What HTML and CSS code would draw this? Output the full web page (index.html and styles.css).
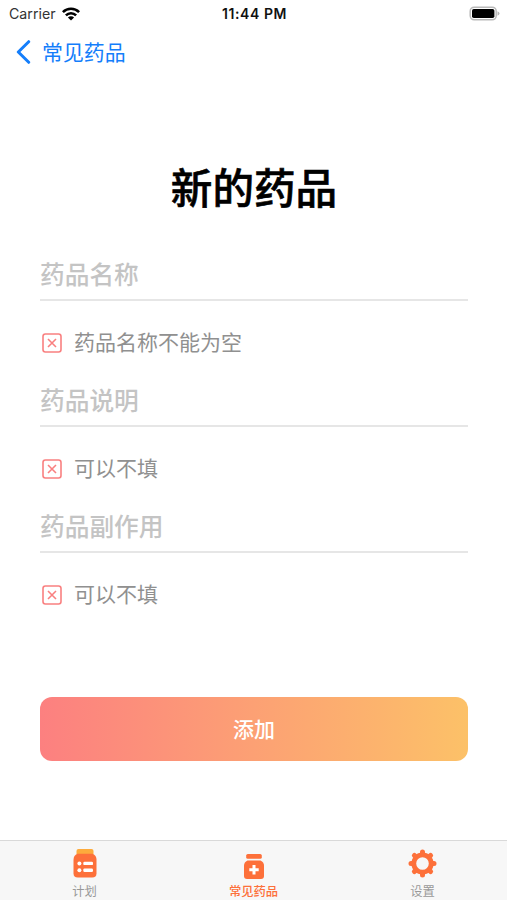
FILE: index.html
```html
<!DOCTYPE html>
<html lang="zh-CN">
<head>
<meta charset="utf-8">
<title>新的药品</title>
<link rel="stylesheet" href="styles.css">
</head>
<body>
<div class="app">
  <header class="status">
    <div class="carrier"><span>Carrier</span>
      <svg class="wifi" viewBox="0 0 18 14"><g fill="none" stroke="#000" stroke-width="2.6"><path d="M.9 5.200a11.400 11.400 0 0 1 16.200 0"/><path d="M3.900 8.400a7.200 7.200 0 0 1 10.200 0"/></g><path d="M5.900 10.500a4.400 4.400 0 0 1 6.200 0L9 13.600z"/></svg>
    </div>
    <div class="clock">11:44 PM</div>
    <svg class="battery" viewBox="0 0 31 15"><rect x="1.200" y="1.200" width="26" height="12.600" rx="4" fill="#fff" stroke="#b9b9b9" stroke-width="1.500"/><rect x="3" y="3" width="22.400" height="9" rx="1.800"/><path d="M28.500 5.200v4.600q2-.8 2-2.300t-2-2.300z" fill="#b5b5b5"/></svg>
  </header>
  <nav class="back">
    <svg class="chevron" viewBox="0 0 16 24"><path d="M13.700 1.700 3.300 12l10.400 10.300" fill="none" stroke="#147efb" stroke-width="3" stroke-linecap="round" stroke-linejoin="round"/></svg>
    <span>常见药品</span>
  </nav>
  <main class="form">
    <h1>新的药品</h1>
    <section class="field">
      <div class="input">药品名称</div>
      <div class="hint"><svg class="cross" viewBox="0 0 20 20"><rect x="1" y="1" width="18" height="18" rx="2.400"/><path d="m6 6 8 8m0-8-8 8"/></svg><span>药品名称不能为空</span></div>
    </section>
    <section class="field">
      <div class="input">药品说明</div>
      <div class="hint"><svg class="cross" viewBox="0 0 20 20"><rect x="1" y="1" width="18" height="18" rx="2.400"/><path d="m6 6 8 8m0-8-8 8"/></svg><span>可以不填</span></div>
    </section>
    <section class="field">
      <div class="input">药品副作用</div>
      <div class="hint"><svg class="cross" viewBox="0 0 20 20"><rect x="1" y="1" width="18" height="18" rx="2.400"/><path d="m6 6 8 8m0-8-8 8"/></svg><span>可以不填</span></div>
    </section>
    <button class="submit">添加</button>
  </main>
  <footer class="tabs">
    <div class="tab">
      <svg viewBox="0 0 30 32"><rect x="6.500" y="1" width="17" height="7" rx="2" fill="#fdab3c"/><path d="M7.500 5.800h15q4 1.500 4 6v13.400q0 4.300-4.300 4.300H7.800q-4.300 0-4.300-4.300V11.800q0-4.500 4-6z" fill="#fd703a"/><g fill="#fff"><circle cx="9.400" cy="15.400" r="2"/><circle cx="9.400" cy="22.300" r="2"/><rect x="13.300" y="13.700" width="9.700" height="3.400" rx="1.200"/><rect x="13.300" y="20.600" width="9.700" height="3.400" rx="1.200"/></g></svg>
      <span>计划</span>
    </div>
    <div class="tab active">
      <svg viewBox="0 0 30 32"><g fill="#fd703a"><rect x="7.200" y="6" width="15.600" height="4.800" rx="1.600"/><path d="M8.500 12.500h13q3.500 1.500 3.500 5V28q0 3-3 3H8q-3 0-3-3V17.500q0-3.500 3.500-5z"/></g><path d="M15 17v9.400m-4.700-4.700h9.400" stroke="#fff" stroke-width="3"/></svg>
      <span>常见药品</span>
    </div>
    <div class="tab">
      <svg viewBox="0 0 30 32"><g fill="none" stroke="#fd703a"><circle cx="14.500" cy="15.500" r="8.700" stroke-width="4.800"/><g stroke-width="5" stroke-linecap="round"><path d="M14.500 4v1M14.500 26v1M3 15.500h1M25 15.500h1M6.400 7.400l.6.6M22 23l.6.6M6.400 23.600l.6-.6M22 8l.6-.6"/></g></g></svg>
      <span>设置</span>
    </div>
  </footer>
</div>
</body>
</html>
```
FILE: styles.css
```css
* { box-sizing: border-box; }
body {
  margin: 0;
  background: #fff;
  font-family: Inter, "Noto Sans CJK SC", sans-serif;
}
.app {
  width: 507px;
  height: 900px;
  display: flex;
  flex-direction: column;
  overflow: hidden;
}
.status {
  height: 27px;
  padding: 0 7px 0 9px;
  display: grid;
  grid-template-columns: 1fr auto 1fr;
  align-items: center;
  color: #111;
}
.carrier { display: flex; align-items: center; gap: 6px; font-size: 14.2px; color: #333; }
.wifi { width: 18px; height: 14px; }
.clock { font-size: 14px; font-weight: 600; letter-spacing: 0.6px; }
.battery { width: 31px; height: 15px; justify-self: end; }
.back {
  height: 50px;
  padding: 0 0 0 15px;
  display: flex;
  align-items: center;
  gap: 11px;
  font-size: 20.9px;
  line-height: 30px;
  color: #147efb;
}
.back span { padding-top: 2px; }
.chevron { width: 16px; height: 24px; }
.form {
  flex: 1;
  padding: 82px 39px 0 40px;
  display: flex;
  flex-direction: column;
}
h1 {
  margin: 0 0 36px;
  font-size: 41.6px;
  line-height: 60px;
  font-weight: 500;
  -webkit-text-stroke: 0.6px #000;
  text-align: center;
  color: #000;
}
.field { height: 126px; }
.input {
  height: 46px;
  padding-top: 5px;
  border-bottom: 2px solid #e6e6e6;
  font-size: 24.7px;
  line-height: 30px;
  font-weight: 500;
  color: #c4c4c4;
}
.hint {
  height: 30px;
  margin-top: 27px;
  padding-left: 2px;
  display: flex;
  align-items: center;
  gap: 12px;
  font-size: 21px;
  line-height: 30px;
  color: #909090;
}
.cross { width: 20px; height: 20px; fill: none; stroke: #f98080; stroke-width: 1.6; }
.submit {
  height: 64px;
  margin-top: 64px;
  padding: 0 0 2px;
  border: 0;
  border-radius: 12px;
  background: linear-gradient(90deg, #fc8080, #fcc168);
  color: #fff;
  font: 500 21px/62px "Noto Sans CJK SC", sans-serif;
}
.tabs {
  height: 60px;
  border-top: 1px solid #d9d9d9;
  background: #f7f7f7;
  display: grid;
  grid-template-columns: repeat(3, 1fr);
}
.tab {
  padding-top: 7px;
  display: flex;
  flex-direction: column;
  align-items: center;
  gap: 3px;
  font-size: 12.3px;
  line-height: 18px;
  color: #999;
}
.tab svg { width: 30px; height: 32px; flex: none; }
.active { color: #fd703a; font-weight: 500; }
```
